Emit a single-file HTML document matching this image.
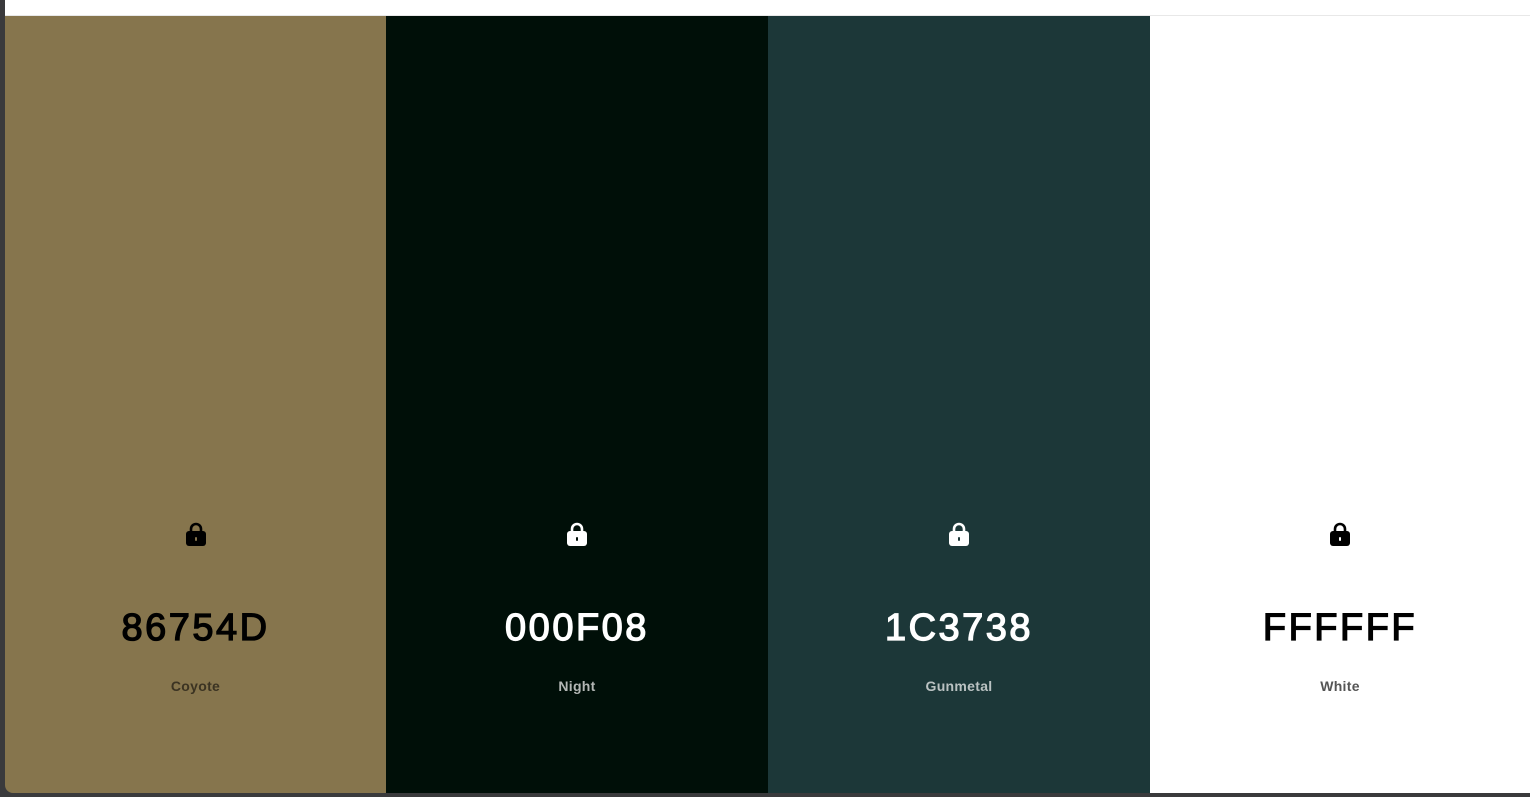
<!DOCTYPE html>
<html><head><style>
*{margin:0;padding:0;box-sizing:border-box}
body{width:1530px;height:797px;background:#3a3a3c;position:relative;overflow:hidden;font-family:"Liberation Sans",sans-serif}
.top{position:absolute;left:5px;top:0;width:1525px;height:16px;background:#fff;border-bottom:1px solid #e8e8e8}
.wrap{position:absolute;left:5px;top:16px;width:1525px;height:777px;display:flex;border-bottom-left-radius:8px;overflow:hidden}
.c{flex:none;height:100%;position:relative}
.lock{position:absolute;left:50%;top:505px;transform:translateX(-50%);width:22px;height:26px}
.hex{position:absolute;left:0;right:0;top:591px;text-align:center;font-size:38px;font-weight:normal;letter-spacing:2.5px;-webkit-text-stroke:1.3px currentColor}
.nm{position:absolute;left:0;right:0;top:662px;text-align:center;font-size:14px;font-weight:600;letter-spacing:.3px}
</style></head><body>
<div class="top"></div>
<div class="wrap">
<div class="c" style="width:381px;background:#86754d;color:#000">
<svg class="lock" viewBox="0 0 22 26"><path d="M6 11V8a5 5 0 0 1 10 0v3" fill="none" stroke="#000" stroke-width="2.6"/><rect x="1" y="10" width="20" height="15" rx="3" fill="#000"/><rect x="10" y="16" width="2" height="4" rx="1" fill="#86754d"/></svg>
<div class="hex">86754D</div><div class="nm" style="color:#3b3322">Coyote</div></div>
<div class="c" style="width:382px;background:#000f08;color:#fff">
<svg class="lock" viewBox="0 0 22 26"><path d="M6 11V8a5 5 0 0 1 10 0v3" fill="none" stroke="#fff" stroke-width="2.6"/><rect x="1" y="10" width="20" height="15" rx="3" fill="#fff"/><rect x="10" y="16" width="2" height="4" rx="1" fill="#000f08"/></svg>
<div class="hex">000F08</div><div class="nm" style="color:#b3b7b5">Night</div></div>
<div class="c" style="width:382px;background:#1c3738;color:#fff">
<svg class="lock" viewBox="0 0 22 26"><path d="M6 11V8a5 5 0 0 1 10 0v3" fill="none" stroke="#fff" stroke-width="2.6"/><rect x="1" y="10" width="20" height="15" rx="3" fill="#fff"/><rect x="10" y="16" width="2" height="4" rx="1" fill="#1c3738"/></svg>
<div class="hex">1C3738</div><div class="nm" style="color:#bac2c2">Gunmetal</div></div>
<div class="c" style="width:380px;background:#fff;color:#000">
<svg class="lock" viewBox="0 0 22 26"><path d="M6 11V8a5 5 0 0 1 10 0v3" fill="none" stroke="#000" stroke-width="2.6"/><rect x="1" y="10" width="20" height="15" rx="3" fill="#000"/><rect x="10" y="16" width="2" height="4" rx="1" fill="#fff"/></svg>
<div class="hex">FFFFFF</div><div class="nm" style="color:#555">White</div></div>
</div>
</body></html>
